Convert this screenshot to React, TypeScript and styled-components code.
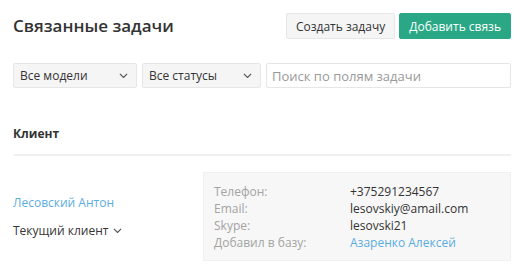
import React from "react";
import styled, { createGlobalStyle } from "styled-components";

const Global = createGlobalStyle`
  html, body { margin: 0; padding: 0; background: #fff; }
  body { font-family: "Open Sans", "Noto Sans", sans-serif; color: #333; }
  * { box-sizing: border-box; }
`;

const Page = styled.div`
  padding: 13px 12px 0 13px;
  width: 523px;
`;

const Header = styled.div`
  display: flex;
  align-items: center;
  justify-content: space-between;
  height: 26px;
`;

const Title = styled.h1`
  margin: 0;
  font-size: 17px;
  font-weight: 600;
  color: #333;
  line-height: 26px;
`;

const Actions = styled.div`
  display: flex;
  gap: 4px;
`;

const Button = styled.button<{ $primary?: boolean }>`
  height: 26px;
  padding: 0 9px;
  font-family: inherit;
  font-size: 12px;
  border-radius: 2px;
  border: 1px solid ${(p) => (p.$primary ? "#2aa885" : "#e6e6e6")};
  background: ${(p) => (p.$primary ? "#2aa885" : "#f5f5f5")};
  color: ${(p) => (p.$primary ? "#fff" : "#333")};
  cursor: pointer;
`;

const Filters = styled.div`
  display: flex;
  gap: 5px;
  margin-top: 24px;
`;

const Select = styled.div<{ $w: number }>`
  width: ${(p) => p.$w}px;
  height: 25px;
  display: flex;
  align-items: center;
  justify-content: space-between;
  padding: 0 8px 0 6px;
  background: #f5f5f5;
  border: 1px solid #e6e6e6;
  border-radius: 2px;
  font-size: 12px;
  color: #333;
`;

const Search = styled.input`
  flex: 1;
  height: 25px;
  padding: 0 5px;
  border: 1px solid #e6e6e6;
  border-radius: 2px;
  font-family: inherit;
  font-size: 13px;
  color: #333;
  outline: none;
  &::placeholder { color: #999; }
`;

const Section = styled.div`
  margin-top: 37px;
`;

const SectionTitle = styled.h2`
  margin: 0;
  font-size: 12px;
  font-weight: 700;
  line-height: 18px;
  padding-bottom: 11px;
  border-bottom: 2px solid #f0f0f0;
`;

const ClientRow = styled.div`
  display: grid;
  grid-template-columns: 190px 1fr;
  align-items: center;
  margin-top: 16px;
`;

const ClientInfo = styled.div`
  display: flex;
  flex-direction: column;
  gap: 11px;
`;

const Link = styled.a`
  color: #5aaddf;
  font-size: 12px;
  line-height: 17px;
  text-decoration: none;
`;

const Current = styled.div`
  display: flex;
  align-items: center;
  gap: 5px;
  font-size: 12px;
  line-height: 17px;
  color: #333;
`;

const Card = styled.div`
  background: #f7f7f7;
  border: 1px solid #f0f0f0;
  padding: 10px 10px 9px 10px;
  display: grid;
  grid-template-columns: 136px 1fr;
  font-size: 12px;
  line-height: 17px;
`;

const Label = styled.div`
  color: #a3a3a3;
`;

const Value = styled.div<{ $link?: boolean }>`
  color: ${(p) => (p.$link ? "#5aaddf" : "#333")};
`;

const Chevron = ({ size = 10 }: { size?: number }) => (
  <svg width={size} height={size * 0.6} viewBox="0 0 10 6" fill="none">
    <path d="M1 1l4 4 4-4" stroke="#555" strokeWidth="1.3" />
  </svg>
);

export default function App() {
  return (
    <Page>
      <Global />
      <Header>
        <Title>Связанные задачи</Title>
        <Actions>
          <Button>Создать задачу</Button>
          <Button $primary>Добавить связь</Button>
        </Actions>
      </Header>
      <Filters>
        <Select $w={124}>
          <span>Все модели</span>
          <Chevron size={9} />
        </Select>
        <Select $w={119}>
          <span>Все статусы</span>
          <Chevron size={9} />
        </Select>
        <Search placeholder="Поиск по полям задачи" />
      </Filters>
      <Section>
        <SectionTitle>Клиент</SectionTitle>
        <ClientRow>
          <ClientInfo>
            <Link href="#">Лесовский Антон</Link>
            <Current>
              Текущий клиент <Chevron size={9} />
            </Current>
          </ClientInfo>
          <Card>
            <Label>Телефон:</Label>
            <Value>+375291234567</Value>
            <Label>Email:</Label>
            <Value>lesovskiy@amail.com</Value>
            <Label>Skype:</Label>
            <Value>lesovski21</Value>
            <Label>Добавил в базу:</Label>
            <Value $link>Азаренко Алексей</Value>
          </Card>
        </ClientRow>
      </Section>
    </Page>
  );
}
